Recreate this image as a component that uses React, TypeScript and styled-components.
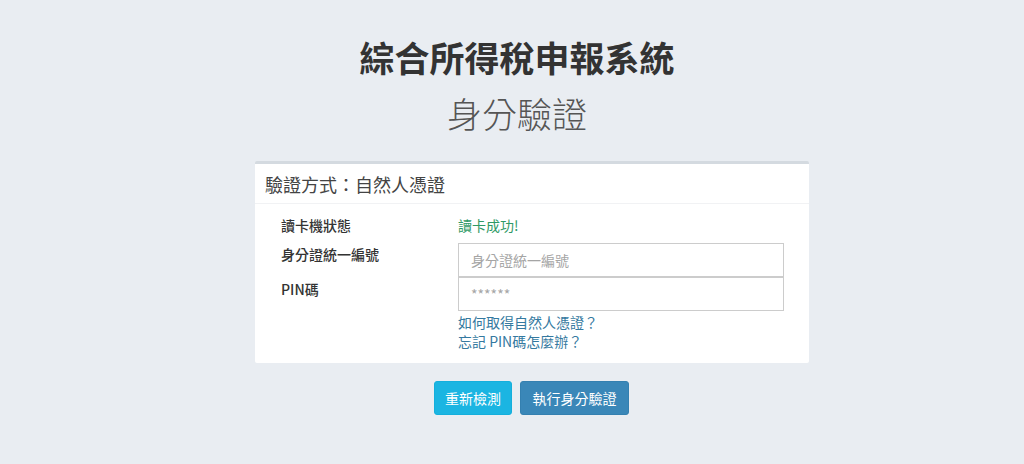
import React from "react";
import styled, { createGlobalStyle } from "styled-components";

const Global = createGlobalStyle`
  html, body { margin: 0; padding: 0; }
  body {
    background: #e9edf2;
    font-family: "Noto Sans CJK TC", "Noto Sans", sans-serif;
    color: #333;
  }
`;

const Page = styled.div`
  width: 1024px;
  height: 464px;
  display: flex;
  flex-direction: column;
  padding-top: 36px;
  box-sizing: border-box;
`;

const Title = styled.h1`
  margin: 0 0 0 10px;
  text-align: center;
  font-size: 35px;
  line-height: 42px;
  font-weight: 700;
  color: #333;
`;

const Subtitle = styled.h2`
  margin: 14px 0 0 10px;
  text-align: center;
  font-size: 35px;
  line-height: 42px;
  font-weight: 300;
  color: #555;
`;

const Panel = styled.section`
  margin: 27px 0 0 255px;
  width: 554px;
  background: #fff;
  border-top: 3px solid #d4dae0;
  border-radius: 2px;
  box-sizing: border-box;
  padding-bottom: 12px;
`;

const PanelHeader = styled.div`
  height: 39px;
  display: flex;
  align-items: center;
  padding-left: 10px;
  font-size: 18px;
  color: #444;
  border-bottom: 1px solid #f1f2f4;
`;

const PanelBody = styled.div`
  padding: 11px 0 0 26px;
  display: grid;
  grid-template-columns: 177px 326px;
  row-gap: 8px;
`;

const Label = styled.div`
  font-size: 14px;
  line-height: 20px;
  font-weight: 500;
  color: #333;
`;

const Status = styled.div`
  font-size: 14px;
  line-height: 20px;
  color: #2f9a66;
`;

const Field = styled.div`
  display: flex;
  flex-direction: column;
`;

const Input = styled.input`
  box-sizing: border-box;
  width: 326px;
  height: 34px;
  border: 1px solid #ccc;
  border-radius: 0;
  padding: 0 12px;
  font-family: "Noto Sans CJK TC", "Noto Sans", sans-serif;
  font-size: 14px;
  color: #555;
  outline: none;
  &::placeholder { color: #a5a5a5; }
`;

const LabelStack = styled.div`
  display: flex;
  flex-direction: column;
  gap: 15px;
  padding-top: 1px;
`;

const Link = styled.a`
  font-size: 14px;
  line-height: 19px;
  color: #3479a0;
  text-decoration: none;
`;

const Links = styled.div`
  display: flex;
  flex-direction: column;
  padding-top: 2px;
`;

const Buttons = styled.div`
  margin: 18px 0 0 434px;
  display: flex;
  gap: 8px;
`;

const Button = styled.button<{ $variant: "info" | "primary" }>`
  height: 34px;
  padding: 0 ${(p) => (p.$variant === "info" ? 10 : 11.5)}px;
  border: 1px solid ${(p) => (p.$variant === "info" ? "#14afdc" : "#3480b0")};
  border-radius: 3px;
  background: ${(p) => (p.$variant === "info" ? "#1bb5e2" : "#3a87b8")};
  color: #fff;
  font-family: "Noto Sans CJK TC", "Noto Sans", sans-serif;
  font-size: 14px;
  cursor: pointer;
`;

export default function App() {
  return (
    <>
      <Global />
      <Page>
        <Title>綜合所得稅申報系統</Title>
        <Subtitle>身分驗證</Subtitle>
        <Panel>
          <PanelHeader>驗證方式：自然人憑證</PanelHeader>
          <PanelBody>
            <Label>讀卡機狀態</Label>
            <Status>讀卡成功!</Status>
            <LabelStack>
              <Label>身分證統一編號</Label>
              <Label>PIN碼</Label>
            </LabelStack>
            <Field>
              <Input placeholder="身分證統一編號" />
              <Input type="password" placeholder="******" />
              <Links>
                <Link href="#">如何取得自然人憑證？</Link>
                <Link href="#">忘記 PIN碼怎麼辦？</Link>
              </Links>
            </Field>
          </PanelBody>
        </Panel>
        <Buttons>
          <Button $variant="info">重新檢測</Button>
          <Button $variant="primary">執行身分驗證</Button>
        </Buttons>
      </Page>
    </>
  );
}
